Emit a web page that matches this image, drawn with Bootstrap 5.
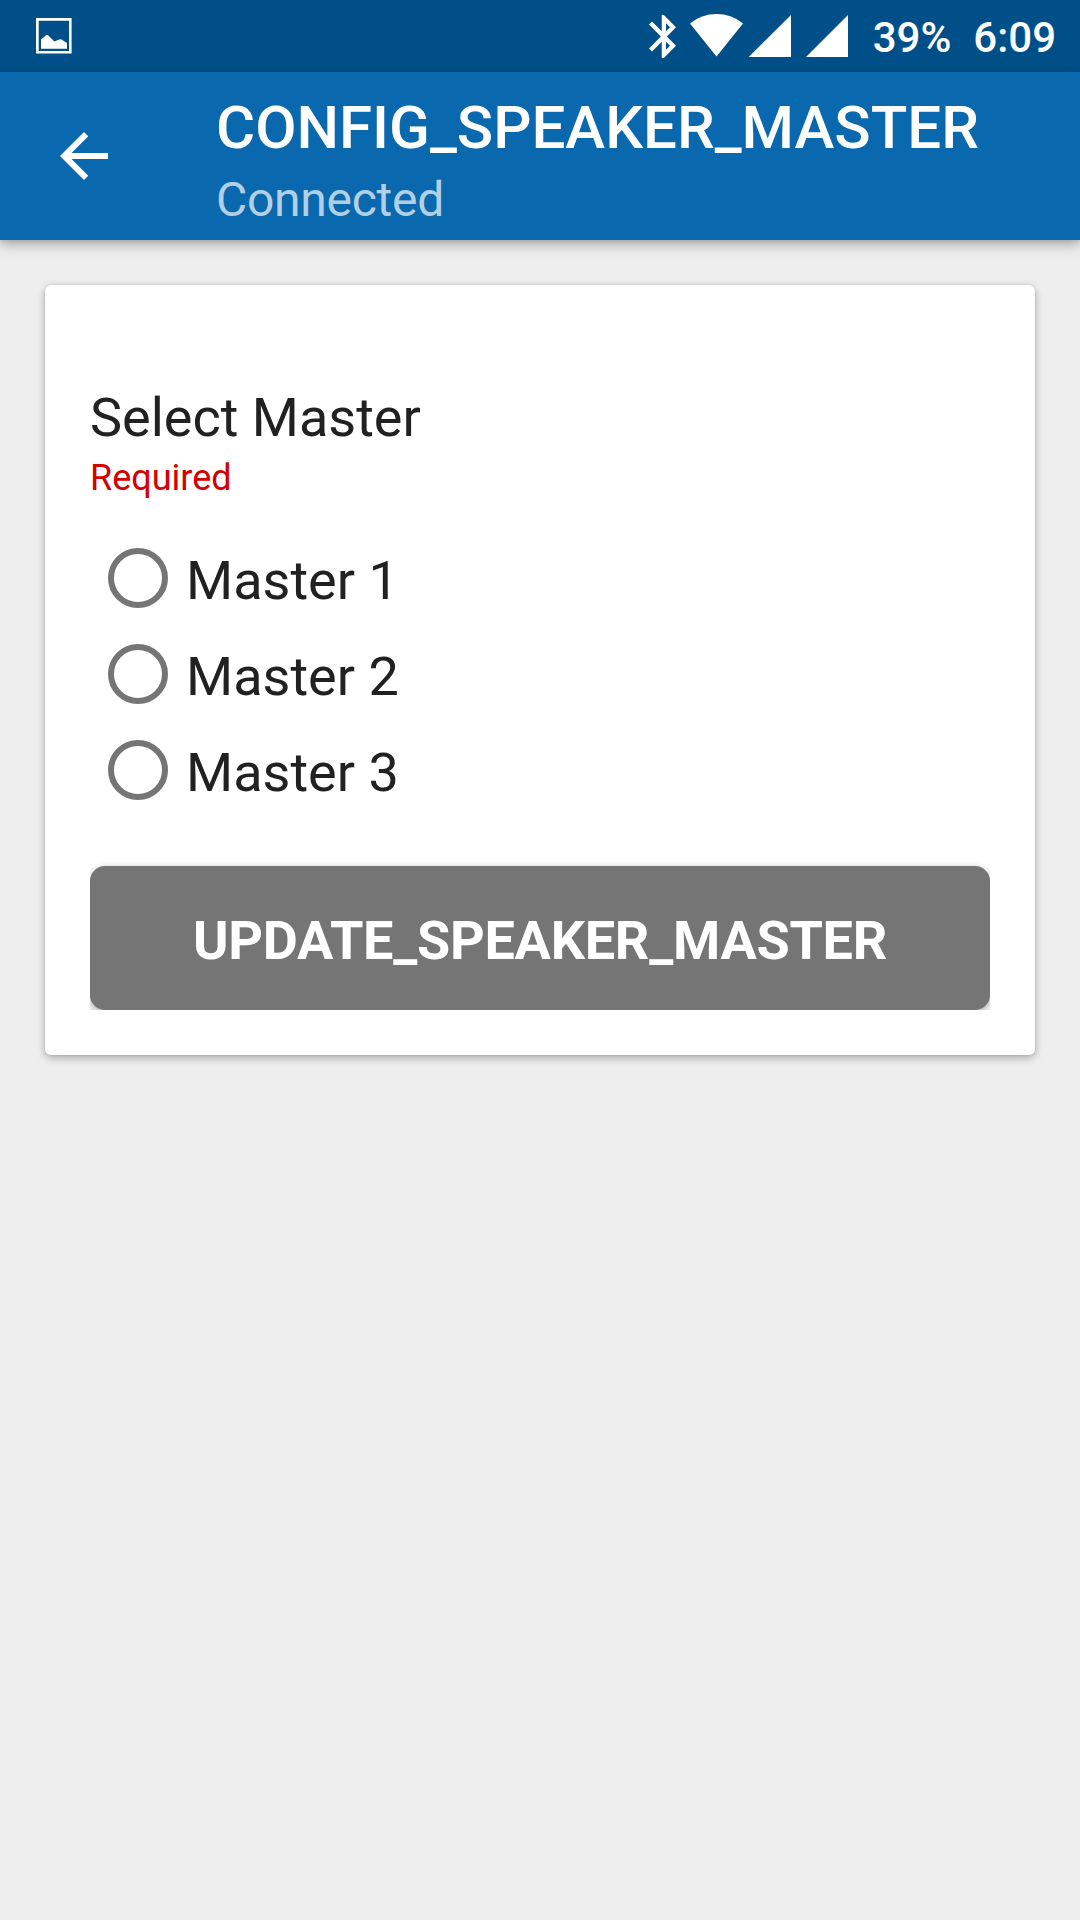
<!DOCTYPE html>
<html lang="en">
<head>
<meta charset="utf-8">
<meta name="viewport" content="width=device-width, initial-scale=1">
<title>CONFIG_SPEAKER_MASTER</title>
<link href="https://cdn.jsdelivr.net/npm/bootstrap@5.3.0/dist/css/bootstrap.min.css" rel="stylesheet">
<style>
  body { background: #eee; font-family: Roboto, sans-serif; color: #212121; }
  svg { display: block; flex: none; }
  .status-bar { height: 72px; background: #004f88; color: #fff; padding: 0 24px 0 36px; }
  .status-icons { height: 72px; }
  .status-text { font-size: 42px; font-weight: 500; line-height: 50px; padding-top: 4px; white-space: nowrap; }
  .wifi-icon { margin-left: 14px; }
  .cell-one { margin-left: 5px; }
  .cell-two { margin-left: 15px; }
  .battery-level { margin-left: 25px; }
  .clock { margin-left: 22px; }
  .app-bar { height: 168px; background: #0a69ae; padding: 0 0 0 48px; box-shadow: 0 5px 12px rgba(0,0,0,.26), 0 2px 5px rgba(0,0,0,.1); }
  .app-heading { margin-left: 96px; padding-top: 8px; }
  .app-title { font-size: 60px; font-weight: 500; line-height: 70px; margin: 0 0 9px; }
  .app-subtitle { font-size: 48px; line-height: 56px; margin: 0; letter-spacing: -.28px; color: rgba(255,255,255,.7); }
  .form-panel { margin: 45px; border-radius: 6px; height: 770px; box-shadow: 0 3px 8px rgba(0,0,0,.28), 0 0 3px rgba(0,0,0,.12); }
  .form-panel .card-body { padding: 101px 45px 45px; }
  .field-title { font-size: 54px; line-height: 64px; margin: 0 0 7px; }
  .field-hint { font-size: 36px; line-height: 42px; margin: 0 0 31px; color: #d50000; }
  .option-row { height: 96px; padding-left: 18px; gap: 18px; }
  .option-row .form-check-input { width: 60px; height: 60px; margin: 0; border: 6px solid #757575; background-color: #fff; flex: none; }
  .option-row .form-check-label { font-size: 54px; line-height: 64px; padding-top: 6px; }
  .submit-wrap { margin-top: 48px; clip-path: inset(-8px 0 0 0); }
  .submit-wrap .btn { height: 144px; border: 0; border-radius: 15px; background: #757575; color: #fff; font-size: 54px; font-weight: 700; line-height: 64px; letter-spacing: -.26px; padding: 6px 0 0; box-shadow: 0 3px 8px rgba(0,0,0,.35); }
</style>
</head>
<body>
<header>
  <div class="status-bar d-flex align-items-center justify-content-between">
    <svg width="36" height="36" viewBox="0 0 36 36" fill="#fff" aria-hidden="true">
      <path fill-rule="evenodd" d="M0 0H35.6V35.6H0ZM2.7 2.7V33H33V2.7Z"/>
      <path d="M5 21.5L10.3 17L11.8 17L18.4 23.4L23.8 21.2L25.5 21.5L31 25V30.8H5Z"/>
    </svg>
    <div class="status-icons d-flex align-items-center">
      <svg width="27" height="43" viewBox="5 2 12.71 20" preserveAspectRatio="none" fill="#fff" aria-hidden="true"><path d="M17.71 7.71L12 2h-1v7.59L6.41 5 5 6.41 10.59 12 5 17.59 6.41 19 11 14.41V22h1l5.71-5.71-4.3-4.29 4.3-4.29zM13 5.83l1.88 1.88L13 9.59V5.83zm1.88 10.46L13 18.17v-3.76l1.88 1.88z"/></svg>
      <svg class="wifi-icon" width="53" height="44" viewBox="0 0 53 44" fill="#fff" aria-hidden="true"><path d="M0 9.5Q11 0 26.5 0T53 9.5L26.5 42.4Z"/></svg>
      <svg class="cell-one" width="43" height="42" viewBox="0 0 43 42" fill="#fff" aria-hidden="true"><path d="M43 0V42H0.7Z"/></svg>
      <svg class="cell-two" width="42" height="42" viewBox="0 0 42 42" fill="#fff" aria-hidden="true"><path d="M42 0V42H0Z"/></svg>
      <span class="status-text battery-level">39%</span>
      <span class="status-text clock">6:09</span>
    </div>
  </div>
  <nav class="app-bar d-flex align-items-center text-white">
    <a href="#" aria-label="Back"><svg width="72" height="72" viewBox="0 0 24 24" fill="#fff" aria-hidden="true"><path d="M20 11H7.83l5.59-5.59L12 4l-8 8 8 8 1.41-1.41L7.83 13H20v-2z"/></svg></a>
    <div class="app-heading">
      <h1 class="app-title">CONFIG_SPEAKER_MASTER</h1>
      <p class="app-subtitle">Connected</p>
    </div>
  </nav>
</header>
<main>
  <form class="card form-panel border-0">
    <div class="card-body">
      <h2 class="field-title fw-normal">Select Master</h2>
      <p class="field-hint">Required</p>
      <div class="option-row d-flex align-items-center">
        <input class="form-check-input" type="radio" name="speaker" id="m1"><label class="form-check-label" for="m1">Master 1</label>
      </div>
      <div class="option-row d-flex align-items-center">
        <input class="form-check-input" type="radio" name="speaker" id="m2"><label class="form-check-label" for="m2">Master 2</label>
      </div>
      <div class="option-row d-flex align-items-center">
        <input class="form-check-input" type="radio" name="speaker" id="m3"><label class="form-check-label" for="m3">Master 3</label>
      </div>
      <div class="submit-wrap">
        <button type="button" class="btn w-100 d-block">UPDATE_SPEAKER_MASTER</button>
      </div>
    </div>
  </form>
</main>
<script src="https://cdn.jsdelivr.net/npm/bootstrap@5.3.0/dist/js/bootstrap.bundle.min.js"></script>
</body>
</html>
